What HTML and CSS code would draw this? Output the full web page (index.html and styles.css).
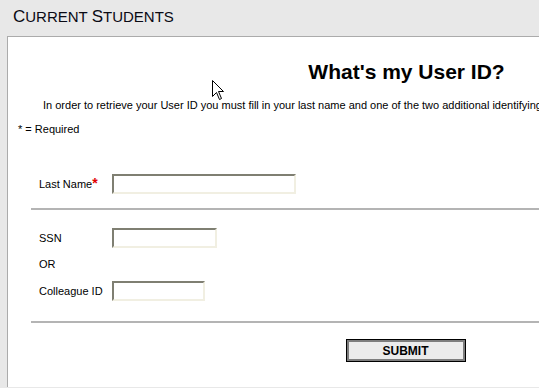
FILE: index.html
```html
<!DOCTYPE html>
<html>
<head>
<meta charset="utf-8">
<link rel="stylesheet" href="styles.css">
</head>
<body>
<div class="header"><span class="big">C</span>URRENT <span class="big">S</span>TUDENTS</div>
<div class="page">
  <div class="box">
    <h1 class="title">What's my User ID?</h1>
    <p class="intro">In order to retrieve your User ID you must fill in your last name and one of the two additional identifying items below.</p>
    <p class="required">* = Required</p>
    <div class="fields">
      <div class="row row-last">
        <label class="label">Last Name<span class="star">*</span></label>
        <input class="input input-last" type="text">
      </div>
      <div class="rule"></div>
      <div class="row row-ssn">
        <label class="label">SSN</label>
        <input class="input input-ssn" type="text">
      </div>
      <div class="or">OR</div>
      <div class="row row-col">
        <label class="label">Colleague ID</label>
        <input class="input input-col" type="text">
      </div>
      <div class="rule rule2"></div>
    </div>
    <div class="actions">
      <button class="submit" type="button">SUBMIT</button>
    </div>
  </div>
</div>
<svg class="cursor" width="13" height="21" viewBox="0 0 13 21"><path d="M0.5 0.5 L0.5 16.5 L4.5 12.5 L7.5 19.5 L9.5 18.5 L6.5 11.5 L11.5 11.5 Z" fill="#fff" stroke="#000" stroke-width="1"/></svg>
</body>
</html>
```

FILE: styles.css
```css
html, body {
  margin: 0;
  padding: 0;
  overflow: hidden;
  background: #e8e8e8;
  font-family: Arial, "Liberation Sans", sans-serif;
  color: #000;
}
body {
  position: relative;
  width: 539px;
  height: 388px;
}
.header {
  height: 36px;
  box-sizing: border-box;
  padding: 8px 0 0 13px;
  font-size: 15px;
  line-height: 18px;
  color: #0a0a14;
  white-space: nowrap;
}
.header .big {
  font-size: 17px;
}
.page {
  padding-left: 7px;
  overflow: hidden;
}
.box {
  width: 798px;
  height: 351px;
  background: #fff;
  border-top: 1px solid #ababab;
  border-left: 1px solid #ababab;
  padding-top: 23px;
  box-sizing: border-box;
}
.title {
  margin: 0;
  font-size: 21px;
  line-height: 24px;
  font-weight: bold;
  text-align: center;
}
.intro {
  margin: 15px 0 0;
  padding-left: 35px;
  font-size: 11px;
  line-height: 13px;
  white-space: nowrap;
}
.required {
  margin: 11px 0 0;
  padding-left: 10px;
  font-size: 11px;
  line-height: 13px;
}
.fields {
  margin-left: 23px;
  padding-top: 38px;
}
.row {
  display: flex;
  align-items: center;
  padding-left: 8px;
  height: 20px;
}
.label {
  width: 73px;
  font-size: 11px;
  line-height: 13px;
  flex: none;
}
.star {
  color: #e00000;
  font-weight: bold;
  font-size: 14px;
}
.input {
  box-sizing: border-box;
  height: 20px;
  margin: 0;
  padding: 0;
  background: #fff;
  border: 2px solid;
  border-color: #7f7f72 #f1efe2 #f1efe2 #7f7f72;
}
.input-last { width: 184px; }
.input-ssn { width: 105px; }
.input-col { width: 93px; }
.rule {
  height: 2px;
  background: #b4b4b4;
  margin: 14px 0 18px;
}
.rule2 {
  margin: 20px 0 0;
}
.or {
  padding-left: 8px;
  font-size: 11px;
  line-height: 13px;
  margin: 10px 0;
}
.actions {
  display: flex;
  justify-content: center;
  padding-top: 16px;
  padding-right: 2px;
}
.submit {
  width: 120px;
  height: 23px;
  box-sizing: border-box;
  background: #ebebeb;
  border: 1px solid #000;
  box-shadow: inset 0 0 0 2px #7d7d7d;
  font-family: Arial, "Liberation Sans", sans-serif;
  font-weight: bold;
  font-size: 12px;
  color: #000;
  padding: 0;
}
.cursor {
  position: absolute;
  left: 212px;
  top: 80px;
}
```
